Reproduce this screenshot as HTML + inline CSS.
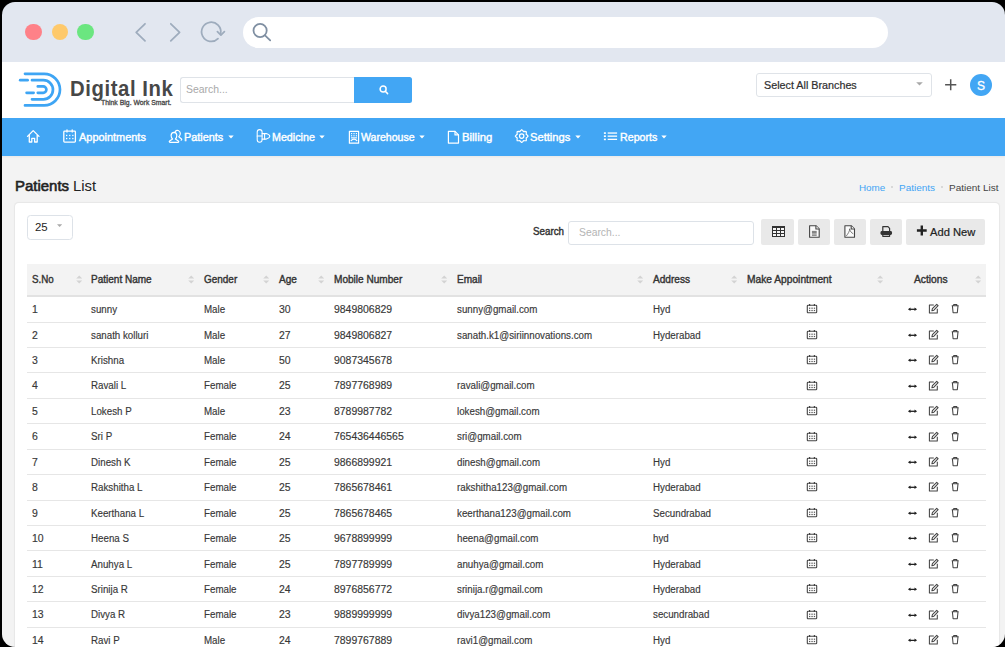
<!DOCTYPE html><html><head><meta charset="utf-8"><style>html,body{margin:0;padding:0;background:#000;overflow:hidden;width:1005px;height:647px;}#w{position:absolute;left:1.5px;top:1.6px;width:1003.5px;height:645.4px;overflow:hidden;border-radius:13px;}#in{position:absolute;left:-1.5px;top:-1.6px;width:1005px;height:647px;}.a{position:absolute;}.t{position:absolute;white-space:nowrap;font-family:"Liberation Sans",sans-serif;}</style></head><body><div id="w"><div id="in">
<svg width="0" height="0" style="position:absolute"><defs><g id="cal"><rect x="1.3" y="2.2" width="9.4" height="7.6" rx="0.8" fill="none" stroke="#444" stroke-width="1.1"/><path d="M3.6 1V3M8.4 1V3" stroke="#444" stroke-width="1.2"/><g fill="#555"><rect x="3" y="4.6" width="1.3" height="1.2"/><rect x="5.4" y="4.6" width="1.3" height="1.2"/><rect x="7.8" y="4.6" width="1.3" height="1.2"/><rect x="3" y="6.9" width="1.3" height="1.2"/><rect x="5.4" y="6.9" width="1.3" height="1.2"/><rect x="7.8" y="6.9" width="1.3" height="1.2"/></g></g><g id="act"><path d="M3.2 6.3H9.8" stroke="#222" stroke-width="1.3"/><path d="M1.9 6.3L4.5 4.6V8Z M11.1 6.3L8.5 4.6V8Z" fill="#222"/><g fill="none" stroke="#444" stroke-width="1.05" stroke-linejoin="round"><path d="M27.8 2H23.4V9.9H31.3V5.8"/><path d="M25.9 7.8L26.4 5.7L30.7 1.3L32.1 2.7L27.9 7.2Z"/><path d="M45.7 2.8H52.7M47.7 2.8V1.5H50.8V2.8M46.4 2.9L47.1 9.8H51.3L52 2.9"/></g></g></defs></svg>
<div class="a" style="left:0;top:150px;width:1005px;height:497px;background:#f3f3f3"></div>
<div class="a" style="left:0;top:0;width:1005px;height:62px;background:#e2e7f0"></div>
<div class="a" style="left:25.3px;top:23.8px;width:16.6px;height:16.6px;border-radius:50%;background:#fe8188"></div>
<div class="a" style="left:51.5px;top:23.8px;width:16.6px;height:16.6px;border-radius:50%;background:#fec96b"></div>
<div class="a" style="left:77.0px;top:23.8px;width:16.6px;height:16.6px;border-radius:50%;background:#6be680"></div>
<svg class="a" style="left:0;top:0" width="300" height="62"><g fill="none" stroke="#9eacbd" stroke-width="1.75" stroke-linecap="round" stroke-linejoin="round"><path d="M145 23.8L136.2 32.3L145 40.8"/><path d="M170.8 23.8L179.6 32.3L170.8 40.8"/><path d="M218 38.6A9.6 9.6 0 1 1 220.65 33.5"/><path d="M217.4 31.6L220.9 35.1L224.4 31.7"/></g></svg>
<div class="a" style="left:243px;top:17px;width:645px;height:31px;border-radius:15.5px;background:#fff"></div>
<svg class="a" style="left:0;top:0" width="300" height="62"><g fill="none" stroke="#7f8fa2" stroke-width="1.8" stroke-linecap="round"><circle cx="260.1" cy="30.5" r="6.6"/><path d="M265 35.4L270.2 40.4"/></g></svg>
<div class="a" style="left:0;top:62px;width:1005px;height:56px;background:#fff"></div>
<svg class="a" style="left:0;top:62px" width="70" height="56" viewBox="0 62 70 56"><g fill="none" stroke="#3ea5f4" stroke-width="2.7" stroke-linecap="round"><path d="M25 73.8H44.2A15.8 15.8 0 0 1 44.2 105.4H25"/><path d="M32 80.2H43.4A9.55 9.55 0 0 1 43.4 99.3H32"/><path d="M37.8 86.4H43.2A3.2 3.2 0 0 1 43.2 92.8H37.8"/><path d="M20.2 80.2H27.6"/><path d="M26.6 92.8H33.6"/></g></svg>
<div id="t0" class="t" style="left:69.80px;top:78.65px;font-size:21.3px;line-height:21.3px;font-weight:700;color:#474747;transform:scaleX(0.9543);transform-origin:0 0;letter-spacing:0.6px;">Digital Ink</div>
<div id="t1" class="t" style="left:101.00px;top:99.50px;font-size:6.6px;line-height:6.6px;font-weight:400;color:#4a4a4a;transform:scaleX(1.0415);transform-origin:0 0;-webkit-text-stroke:0.3px #4a4a4a;">Think Big. Work Smart.</div>
<div class="a" style="left:180px;top:77px;width:174px;height:26px;box-sizing:border-box;border:1px solid #dfe3e8;border-right:none;border-radius:3px 0 0 3px;background:#fff"></div>
<div id="t2" class="t" style="left:186.20px;top:84.70px;font-size:10.2px;line-height:10.2px;font-weight:400;color:#a9a9a9;transform:scaleX(1.0233);transform-origin:0 0;">Search...</div>
<div class="a" style="left:354px;top:77px;width:58.4px;height:25.6px;background:#42a6f4;border-radius:0 2.5px 2.5px 0"></div>
<svg class="a" style="left:377px;top:83px" width="12" height="12"><g fill="none" stroke="#fff" stroke-width="1.5" stroke-linecap="round"><circle cx="6.1" cy="6.1" r="3.0"/><path d="M8.3 8.3L10.6 10.6"/></g></svg>
<div class="a" style="left:755.8px;top:73.2px;width:176px;height:23.6px;box-sizing:border-box;border:1px solid #dfe3e8;border-radius:3px;background:#fff"></div>
<div id="t3" class="t" style="left:763.70px;top:80.05px;font-size:10.5px;line-height:10.5px;font-weight:400;color:#2f2f2f;transform:scaleX(1.0253);transform-origin:0 0;-webkit-text-stroke:0.2px #2f2f2f;">Select All Branches</div>
<svg class="a" style="left:915px;top:81px" width="9" height="6"><path d="M1.2 1.2H7.8L4.5 4.4Z" fill="#a8a8a8"/></svg>
<svg class="a" style="left:940px;top:74px" width="22" height="22"><g stroke="#555" stroke-width="1.5"><path d="M10.7 5.2V16.3M5.1 10.7H16.3"/></g></svg>
<div class="a" style="left:969.5px;top:73.8px;width:22.7px;height:22.7px;border-radius:50%;background:#42a6f4"></div>
<div id="t4" class="t" style="left:977.30px;top:80.30px;font-size:12px;line-height:12px;font-weight:400;color:#fff;transform:scaleX(1.0033);transform-origin:0 0;-webkit-text-stroke:0.3px #fff;">S</div>
<div class="a" style="left:0;top:118px;width:1005px;height:37.5px;background:#42a6f4;box-shadow:0 1px 2px rgba(0,0,0,0.05)"></div>
<div id="t5" class="t" style="left:78.80px;top:131.80px;font-size:11px;line-height:11px;font-weight:400;color:#fff;transform:scaleX(0.9941);transform-origin:0 0;-webkit-text-stroke:0.4px #fff;">Appointments</div>
<div id="t6" class="t" style="left:184.20px;top:131.80px;font-size:11px;line-height:11px;font-weight:400;color:#fff;transform:scaleX(0.9877);transform-origin:0 0;-webkit-text-stroke:0.4px #fff;">Patients</div>
<div id="t7" class="t" style="left:272.30px;top:131.80px;font-size:11px;line-height:11px;font-weight:400;color:#fff;transform:scaleX(0.9732);transform-origin:0 0;-webkit-text-stroke:0.4px #fff;">Medicine</div>
<div id="t8" class="t" style="left:360.70px;top:131.80px;font-size:11px;line-height:11px;font-weight:400;color:#fff;transform:scaleX(0.9605);transform-origin:0 0;-webkit-text-stroke:0.4px #fff;">Warehouse</div>
<div id="t9" class="t" style="left:461.50px;top:131.80px;font-size:11px;line-height:11px;font-weight:400;color:#fff;transform:scaleX(1.0319);transform-origin:0 0;-webkit-text-stroke:0.4px #fff;">Billing</div>
<div id="t10" class="t" style="left:530.40px;top:131.80px;font-size:11px;line-height:11px;font-weight:400;color:#fff;transform:scaleX(1.0134);transform-origin:0 0;-webkit-text-stroke:0.4px #fff;">Settings</div>
<div id="t11" class="t" style="left:619.60px;top:131.80px;font-size:11px;line-height:11px;font-weight:400;color:#fff;transform:scaleX(0.9692);transform-origin:0 0;-webkit-text-stroke:0.4px #fff;">Reports</div>
<svg class="a" style="left:227.5px;top:135px" width="6" height="4"><path d="M0.3 0.4H5.7L3 3.4Z" fill="#fff"/></svg>
<svg class="a" style="left:319.2px;top:135px" width="6" height="4"><path d="M0.3 0.4H5.7L3 3.4Z" fill="#fff"/></svg>
<svg class="a" style="left:418.6px;top:135px" width="6" height="4"><path d="M0.3 0.4H5.7L3 3.4Z" fill="#fff"/></svg>
<svg class="a" style="left:574.5px;top:135px" width="6" height="4"><path d="M0.3 0.4H5.7L3 3.4Z" fill="#fff"/></svg>
<svg class="a" style="left:660.6px;top:135px" width="6" height="4"><path d="M0.3 0.4H5.7L3 3.4Z" fill="#fff"/></svg>
<svg class="a" style="left:0;top:118px" width="700" height="37" viewBox="0 118 700 37"><g fill="none" stroke="#fff" stroke-width="1.3" stroke-linejoin="round" stroke-linecap="round"><path d="M27.5 136.4L33.2 130.6L39 136.4M29.3 134.8V142H31.8V138.3H34.6V142H37.2V134.8"/><rect x="63.8" y="131.2" width="11.6" height="10.9" rx="0.8"/><path d="M67 129.8V132M72.2 129.8V132"/></g><g fill="#fff"><rect x="66" y="134.8" width="1.3" height="1.3"/><rect x="69.1" y="134.8" width="1.3" height="1.3"/><rect x="72.2" y="134.8" width="1.3" height="1.3"/><rect x="66" y="137.9" width="1.3" height="1.3"/><rect x="69.1" y="137.9" width="1.3" height="1.3"/><rect x="72.2" y="137.9" width="1.3" height="1.3"/></g><g fill="none" stroke="#fff" stroke-width="1.2" stroke-linejoin="round" stroke-linecap="round"><path d="M175.2 131.6A2.9 3.3 0 0 1 180.3 133.2C180.4 135 179.6 136 178.8 136.7L181.5 139C181.9 139.4 181.8 140 181.2 140.2"/><path d="M174 132.3A3 3.3 0 0 1 176.8 135.6C176.8 137.3 176.2 138.3 175.4 139L178.4 140.9C179 141.3 178.8 142.3 178 142.3H169.9C169.2 142.3 169 141.3 169.6 140.9L172.6 139C171.8 138.3 171.1 137.3 171.1 135.6A3 3.3 0 0 1 174 132.3Z"/><g stroke-width="1.05"><rect x="257.2" y="129.6" width="4.9" height="12.6" rx="2.45"/><path d="M257.2 135.9H262.1"/><path d="M262.1 133.6H266.3Q269.8 134.8 269.8 136.35Q269.8 137.9 266.3 139.1H262.1"/><path d="M264.6 133.6V139.1"/></g><rect x="349.4" y="131.3" width="9.2" height="11.9"/><path d="M351.2 140.5Q354 137.6 356.8 140.5"/><path d="M448.4 131.4H455L458.5 134.9V143.1H448.4Z"/><path d="M455 131.4V134.9H458.5"/></g><g fill="#fff"><rect x="351" y="133" width="1.2" height="1.2"/><rect x="353.4" y="133" width="1.2" height="1.2"/><rect x="355.8" y="133" width="1.2" height="1.2"/><rect x="351" y="135.2" width="1.2" height="1.2"/><rect x="353.4" y="135.2" width="1.2" height="1.2"/><rect x="355.8" y="135.2" width="1.2" height="1.2"/><rect x="351" y="137.3" width="6" height="1.1"/></g><g fill="none" stroke="#fff" stroke-width="1.2" stroke-linejoin="round"><path d="M521.70 129.70 L522.79 130.61 L523.54 131.67 L524.81 131.44 L526.23 131.57 L526.36 132.99 L526.13 134.26 L527.19 135.01 L528.10 136.10 L527.19 137.19 L526.13 137.94 L526.36 139.21 L526.23 140.63 L524.81 140.76 L523.54 140.53 L522.79 141.59 L521.70 142.50 L520.61 141.59 L519.86 140.53 L518.59 140.76 L517.17 140.63 L517.04 139.21 L517.27 137.94 L516.21 137.19 L515.30 136.10 L516.21 135.01 L517.27 134.26 L517.04 132.99 L517.17 131.57 L518.59 131.44 L519.86 131.67 L520.61 130.61Z"/><circle cx="521.7" cy="136.1" r="2.2"/></g><g fill="#fff"><rect x="603.9" y="132.3" width="2" height="1.6"/><rect x="603.9" y="135.4" width="2" height="1.6"/><rect x="603.9" y="138.6" width="2" height="1.6"/><rect x="607.7" y="132.4" width="9.4" height="1.3"/><rect x="607.7" y="135.5" width="9.4" height="1.3"/><rect x="607.7" y="138.7" width="9.4" height="1.3"/></g></svg>
<div id="t12" class="t" style="left:15.20px;top:178.30px;font-size:15px;line-height:15px;font-weight:400;color:#222;transform:scaleX(0.9972);transform-origin:0 0;-webkit-text-stroke:0.6px #222;">Patients</div>
<div id="t13" class="t" style="left:72.50px;top:178.30px;font-size:15px;line-height:15px;font-weight:400;color:#222;transform:scaleX(0.9913);transform-origin:0 0;">List</div>
<div id="t14" class="t" style="left:859.40px;top:183.05px;font-size:9.5px;line-height:9.5px;font-weight:400;color:#42a5f5;transform:scaleX(1.0373);transform-origin:0 0;">Home</div>
<div id="t15" class="t" style="left:898.90px;top:183.05px;font-size:9.5px;line-height:9.5px;font-weight:400;color:#42a5f5;transform:scaleX(1.0516);transform-origin:0 0;">Patients</div>
<div id="t16" class="t" style="left:949.10px;top:183.05px;font-size:9.5px;line-height:9.5px;font-weight:400;color:#444;transform:scaleX(1.0532);transform-origin:0 0;">Patient List</div>
<div class="a" style="left:891.3px;top:186.3px;width:2.2px;height:2.2px;border-radius:50%;background:#cfcfcf"></div>
<div class="a" style="left:941.1px;top:186.3px;width:2.2px;height:2.2px;border-radius:50%;background:#cfcfcf"></div>
<div class="a" style="left:14.5px;top:202.8px;width:984px;height:460px;background:#fff;border-radius:4px;box-shadow:0 0 1px 0.5px rgba(0,0,0,0.05)"></div>
<div class="a" style="left:27.3px;top:215.3px;width:45.4px;height:24.3px;box-sizing:border-box;border:1px solid #dde2e8;border-radius:3.5px"></div>
<div id="t17" class="t" style="left:35.40px;top:222.65px;font-size:10.3px;line-height:10.3px;font-weight:400;color:#222;transform:scaleX(1.1072);transform-origin:0 0;">25</div>
<svg class="a" style="left:56px;top:223px" width="8" height="6"><path d="M1 1.2H6.2L3.6 4Z" fill="#aaa"/></svg>
<div id="t18" class="t" style="left:532.50px;top:226.80px;font-size:10px;line-height:10px;font-weight:400;color:#333;transform:scaleX(0.9779);transform-origin:0 0;-webkit-text-stroke:0.4px #333;">Search</div>
<div class="a" style="left:568.3px;top:220.5px;width:186.2px;height:24.8px;box-sizing:border-box;border:1px solid #dde2e8;border-radius:3px"></div>
<div id="t19" class="t" style="left:578.50px;top:227.70px;font-size:10.2px;line-height:10.2px;font-weight:400;color:#b4b4b4;transform:scaleX(1.0157);transform-origin:0 0;">Search...</div>
<div class="a" style="left:761.3px;top:219px;width:32.8px;height:26px;background:#e9e9e9;border-radius:2px"></div>
<div class="a" style="left:798.1px;top:219px;width:31.9px;height:26px;background:#e9e9e9;border-radius:2px"></div>
<div class="a" style="left:834.1px;top:219px;width:31.9px;height:26px;background:#e9e9e9;border-radius:2px"></div>
<div class="a" style="left:870.1px;top:219px;width:31.9px;height:26px;background:#e9e9e9;border-radius:2px"></div>
<div class="a" style="left:906.2px;top:219px;width:78.8px;height:26px;background:#e9e9e9;border-radius:2px"></div>
<div id="t20" class="t" style="left:929.80px;top:226.70px;font-size:11.2px;line-height:11.2px;font-weight:400;color:#222;transform:scaleX(0.9972);transform-origin:0 0;-webkit-text-stroke:0.2px #222;">Add New</div>
<svg class="a" style="left:915px;top:224px" width="14" height="14"><path d="M6.8 1.6V11.4M1.9 6.5H11.7" stroke="#222" stroke-width="2.4"/></svg>
<svg class="a" style="left:760px;top:218px" width="140" height="28" viewBox="760 218 140 28"><g shape-rendering="crispEdges"><rect x="772" y="226" width="13" height="11" fill="#333"/><g fill="#f6f6f6"><rect x="773" y="228" width="3" height="2"/><rect x="777" y="228" width="3" height="2"/><rect x="781" y="228" width="3" height="2"/><rect x="773" y="231" width="3" height="2"/><rect x="777" y="231" width="3" height="2"/><rect x="781" y="231" width="3" height="2"/><rect x="773" y="234" width="3" height="2"/><rect x="777" y="234" width="3" height="2"/><rect x="781" y="234" width="3" height="2"/></g></g><g fill="#fbfbfb" stroke="#444" stroke-width="1.1" stroke-linejoin="round"><path d="M809.6 225.7H815.9L819.2 229V237.3H809.6Z"/><path d="M815.9 225.7V229H819.2"/><path d="M844.9 225.7H851.2L854.5 229V237.3H844.9Z"/><path d="M851.2 225.7V229H854.5"/></g><path d="M846.3 236C847.8 234 849.9 231 849.6 228.8C850.2 231.4 851.3 232.8 853.3 233.8" fill="none" stroke="#555" stroke-width="0.75"/><g fill="#666"><rect x="811.9" y="230.9" width="4.8" height="0.9"/><rect x="811.9" y="232.2" width="4.8" height="0.9"/><rect x="811.9" y="233.5" width="4.8" height="0.9"/><rect x="811.9" y="234.8" width="4.8" height="0.9"/></g><g fill="none" stroke="#333" stroke-width="1.2" stroke-linejoin="round"><path d="M882.8 231.5V226.7H888L889.6 228.3V231.5"/><path d="M882.8 233.5V236.3H889.6V233.5"/></g><rect x="880.5" y="231" width="11.5" height="4" rx="1.4" fill="#333"/></svg>
<div class="a" style="left:27.2px;top:263.6px;width:958.6px;height:31.8px;background:#f3f3f3"></div>
<div class="a" style="left:27.2px;top:295.2px;width:958.6px;height:1.8px;background:#e2e2e2"></div>
<div id="t21" class="t" style="left:32.10px;top:274.80px;font-size:10px;line-height:10px;font-weight:400;color:#333;transform:scaleX(0.9752);transform-origin:0 0;-webkit-text-stroke:0.38px #333;">S.No</div>
<div id="t22" class="t" style="left:91.20px;top:274.80px;font-size:10px;line-height:10px;font-weight:400;color:#333;transform:scaleX(1.0018);transform-origin:0 0;-webkit-text-stroke:0.38px #333;">Patient Name</div>
<div id="t23" class="t" style="left:203.80px;top:274.80px;font-size:10px;line-height:10px;font-weight:400;color:#333;transform:scaleX(0.9951);transform-origin:0 0;-webkit-text-stroke:0.38px #333;">Gender</div>
<div id="t24" class="t" style="left:279.00px;top:274.80px;font-size:10px;line-height:10px;font-weight:400;color:#333;transform:scaleX(1.0060);transform-origin:0 0;-webkit-text-stroke:0.38px #333;">Age</div>
<div id="t25" class="t" style="left:333.60px;top:274.80px;font-size:10px;line-height:10px;font-weight:400;color:#333;transform:scaleX(1.0072);transform-origin:0 0;-webkit-text-stroke:0.38px #333;">Mobile Number</div>
<div id="t26" class="t" style="left:457.10px;top:274.80px;font-size:10px;line-height:10px;font-weight:400;color:#333;transform:scaleX(1.0035);transform-origin:0 0;-webkit-text-stroke:0.38px #333;">Email</div>
<div id="t27" class="t" style="left:652.60px;top:274.80px;font-size:10px;line-height:10px;font-weight:400;color:#333;transform:scaleX(1.0114);transform-origin:0 0;-webkit-text-stroke:0.38px #333;">Address</div>
<div id="t28" class="t" style="left:746.80px;top:274.80px;font-size:10px;line-height:10px;font-weight:400;color:#333;transform:scaleX(1.0216);transform-origin:0 0;-webkit-text-stroke:0.38px #333;">Make Appointment</div>
<div id="t29" class="t" style="left:914.20px;top:274.80px;font-size:10px;line-height:10px;font-weight:400;color:#333;transform:scaleX(1.0251);transform-origin:0 0;-webkit-text-stroke:0.38px #333;">Actions</div>
<svg class="a" style="left:75.5px;top:275px" width="7" height="9" viewBox="0 0 7 9"><path d="M3.2 0.6L6.2 3.6H0.2Z M3.2 8.4L6.2 5.4H0.2Z" fill="#d3d3d3"/></svg>
<svg class="a" style="left:188.4px;top:275px" width="7" height="9" viewBox="0 0 7 9"><path d="M3.2 0.6L6.2 3.6H0.2Z M3.2 8.4L6.2 5.4H0.2Z" fill="#d3d3d3"/></svg>
<svg class="a" style="left:263.0px;top:275px" width="7" height="9" viewBox="0 0 7 9"><path d="M3.2 0.6L6.2 3.6H0.2Z M3.2 8.4L6.2 5.4H0.2Z" fill="#d3d3d3"/></svg>
<svg class="a" style="left:317.7px;top:275px" width="7" height="9" viewBox="0 0 7 9"><path d="M3.2 0.6L6.2 3.6H0.2Z M3.2 8.4L6.2 5.4H0.2Z" fill="#d3d3d3"/></svg>
<svg class="a" style="left:441.0px;top:275px" width="7" height="9" viewBox="0 0 7 9"><path d="M3.2 0.6L6.2 3.6H0.2Z M3.2 8.4L6.2 5.4H0.2Z" fill="#d3d3d3"/></svg>
<svg class="a" style="left:636.6px;top:275px" width="7" height="9" viewBox="0 0 7 9"><path d="M3.2 0.6L6.2 3.6H0.2Z M3.2 8.4L6.2 5.4H0.2Z" fill="#d3d3d3"/></svg>
<svg class="a" style="left:730.6px;top:275px" width="7" height="9" viewBox="0 0 7 9"><path d="M3.2 0.6L6.2 3.6H0.2Z M3.2 8.4L6.2 5.4H0.2Z" fill="#d3d3d3"/></svg>
<svg class="a" style="left:877.1px;top:275px" width="7" height="9" viewBox="0 0 7 9"><path d="M3.2 0.6L6.2 3.6H0.2Z M3.2 8.4L6.2 5.4H0.2Z" fill="#d3d3d3"/></svg>
<svg class="a" style="left:975.0px;top:275px" width="7" height="9" viewBox="0 0 7 9"><path d="M3.2 0.6L6.2 3.6H0.2Z M3.2 8.4L6.2 5.4H0.2Z" fill="#d3d3d3"/></svg>
<div class="t" style="left:32.00px;top:304.80px;font-size:10px;line-height:10px;color:#383838;-webkit-text-stroke:0.15px #383838;transform:scaleX(1.045);transform-origin:0 0">1</div>
<div class="t" style="left:91.10px;top:304.80px;font-size:10px;line-height:10px;color:#383838;-webkit-text-stroke:0.15px #383838;transform:scaleX(0.975);transform-origin:0 0">sunny</div>
<div class="t" style="left:203.70px;top:304.80px;font-size:10px;line-height:10px;color:#383838;-webkit-text-stroke:0.15px #383838;transform:scaleX(0.975);transform-origin:0 0">Male</div>
<div class="t" style="left:278.90px;top:304.80px;font-size:10px;line-height:10px;color:#383838;-webkit-text-stroke:0.15px #383838;transform:scaleX(1.045);transform-origin:0 0">30</div>
<div class="t" style="left:333.50px;top:304.80px;font-size:10px;line-height:10px;color:#383838;-webkit-text-stroke:0.15px #383838;transform:scaleX(1.045);transform-origin:0 0">9849806829</div>
<div class="t" style="left:457.00px;top:304.80px;font-size:10px;line-height:10px;color:#383838;-webkit-text-stroke:0.15px #383838;transform:scaleX(0.975);transform-origin:0 0">sunny@gmail.com</div>
<div class="t" style="left:652.50px;top:304.80px;font-size:10px;line-height:10px;color:#383838;-webkit-text-stroke:0.15px #383838;transform:scaleX(0.975);transform-origin:0 0">Hyd</div>
<svg class="a" style="left:806px;top:303.40px" width="12" height="11" viewBox="0 0 12 11"><use href="#cal"/></svg>
<svg class="a" style="left:906px;top:303.40px" width="56" height="11" viewBox="0 0 56 11"><use href="#act"/></svg>
<div class="a" style="left:27px;top:322px;width:959px;height:1px;background:#e6e6e6"></div>
<div class="t" style="left:32.00px;top:330.80px;font-size:10px;line-height:10px;color:#383838;-webkit-text-stroke:0.15px #383838;transform:scaleX(1.045);transform-origin:0 0">2</div>
<div class="t" style="left:91.10px;top:330.80px;font-size:10px;line-height:10px;color:#383838;-webkit-text-stroke:0.15px #383838;transform:scaleX(0.975);transform-origin:0 0">sanath kolluri</div>
<div class="t" style="left:203.70px;top:330.80px;font-size:10px;line-height:10px;color:#383838;-webkit-text-stroke:0.15px #383838;transform:scaleX(0.975);transform-origin:0 0">Male</div>
<div class="t" style="left:278.90px;top:330.80px;font-size:10px;line-height:10px;color:#383838;-webkit-text-stroke:0.15px #383838;transform:scaleX(1.045);transform-origin:0 0">27</div>
<div class="t" style="left:333.50px;top:330.80px;font-size:10px;line-height:10px;color:#383838;-webkit-text-stroke:0.15px #383838;transform:scaleX(1.045);transform-origin:0 0">9849806827</div>
<div class="t" style="left:457.00px;top:330.80px;font-size:10px;line-height:10px;color:#383838;-webkit-text-stroke:0.15px #383838;transform:scaleX(0.975);transform-origin:0 0">sanath.k1@siriinnovations.com</div>
<div class="t" style="left:652.50px;top:330.80px;font-size:10px;line-height:10px;color:#383838;-webkit-text-stroke:0.15px #383838;transform:scaleX(0.975);transform-origin:0 0">Hyderabad</div>
<svg class="a" style="left:806px;top:328.83px" width="12" height="11" viewBox="0 0 12 11"><use href="#cal"/></svg>
<svg class="a" style="left:906px;top:328.83px" width="56" height="11" viewBox="0 0 56 11"><use href="#act"/></svg>
<div class="a" style="left:27px;top:347px;width:959px;height:1px;background:#e6e6e6"></div>
<div class="t" style="left:32.00px;top:355.80px;font-size:10px;line-height:10px;color:#383838;-webkit-text-stroke:0.15px #383838;transform:scaleX(1.045);transform-origin:0 0">3</div>
<div class="t" style="left:91.10px;top:355.80px;font-size:10px;line-height:10px;color:#383838;-webkit-text-stroke:0.15px #383838;transform:scaleX(0.975);transform-origin:0 0">Krishna</div>
<div class="t" style="left:203.70px;top:355.80px;font-size:10px;line-height:10px;color:#383838;-webkit-text-stroke:0.15px #383838;transform:scaleX(0.975);transform-origin:0 0">Male</div>
<div class="t" style="left:278.90px;top:355.80px;font-size:10px;line-height:10px;color:#383838;-webkit-text-stroke:0.15px #383838;transform:scaleX(1.045);transform-origin:0 0">50</div>
<div class="t" style="left:333.50px;top:355.80px;font-size:10px;line-height:10px;color:#383838;-webkit-text-stroke:0.15px #383838;transform:scaleX(1.045);transform-origin:0 0">9087345678</div>
<svg class="a" style="left:806px;top:354.26px" width="12" height="11" viewBox="0 0 12 11"><use href="#cal"/></svg>
<svg class="a" style="left:906px;top:354.26px" width="56" height="11" viewBox="0 0 56 11"><use href="#act"/></svg>
<div class="a" style="left:27px;top:372px;width:959px;height:1px;background:#e6e6e6"></div>
<div class="t" style="left:32.00px;top:380.80px;font-size:10px;line-height:10px;color:#383838;-webkit-text-stroke:0.15px #383838;transform:scaleX(1.045);transform-origin:0 0">4</div>
<div class="t" style="left:91.10px;top:380.80px;font-size:10px;line-height:10px;color:#383838;-webkit-text-stroke:0.15px #383838;transform:scaleX(0.975);transform-origin:0 0">Ravali L</div>
<div class="t" style="left:203.70px;top:380.80px;font-size:10px;line-height:10px;color:#383838;-webkit-text-stroke:0.15px #383838;transform:scaleX(0.975);transform-origin:0 0">Female</div>
<div class="t" style="left:278.90px;top:380.80px;font-size:10px;line-height:10px;color:#383838;-webkit-text-stroke:0.15px #383838;transform:scaleX(1.045);transform-origin:0 0">25</div>
<div class="t" style="left:333.50px;top:380.80px;font-size:10px;line-height:10px;color:#383838;-webkit-text-stroke:0.15px #383838;transform:scaleX(1.045);transform-origin:0 0">7897768989</div>
<div class="t" style="left:457.00px;top:380.80px;font-size:10px;line-height:10px;color:#383838;-webkit-text-stroke:0.15px #383838;transform:scaleX(0.975);transform-origin:0 0">ravali@gmail.com</div>
<svg class="a" style="left:806px;top:379.69px" width="12" height="11" viewBox="0 0 12 11"><use href="#cal"/></svg>
<svg class="a" style="left:906px;top:379.69px" width="56" height="11" viewBox="0 0 56 11"><use href="#act"/></svg>
<div class="a" style="left:27px;top:398px;width:959px;height:1px;background:#e6e6e6"></div>
<div class="t" style="left:32.00px;top:406.80px;font-size:10px;line-height:10px;color:#383838;-webkit-text-stroke:0.15px #383838;transform:scaleX(1.045);transform-origin:0 0">5</div>
<div class="t" style="left:91.10px;top:406.80px;font-size:10px;line-height:10px;color:#383838;-webkit-text-stroke:0.15px #383838;transform:scaleX(0.975);transform-origin:0 0">Lokesh P</div>
<div class="t" style="left:203.70px;top:406.80px;font-size:10px;line-height:10px;color:#383838;-webkit-text-stroke:0.15px #383838;transform:scaleX(0.975);transform-origin:0 0">Male</div>
<div class="t" style="left:278.90px;top:406.80px;font-size:10px;line-height:10px;color:#383838;-webkit-text-stroke:0.15px #383838;transform:scaleX(1.045);transform-origin:0 0">23</div>
<div class="t" style="left:333.50px;top:406.80px;font-size:10px;line-height:10px;color:#383838;-webkit-text-stroke:0.15px #383838;transform:scaleX(1.045);transform-origin:0 0">8789987782</div>
<div class="t" style="left:457.00px;top:406.80px;font-size:10px;line-height:10px;color:#383838;-webkit-text-stroke:0.15px #383838;transform:scaleX(0.975);transform-origin:0 0">lokesh@gmail.com</div>
<svg class="a" style="left:806px;top:405.12px" width="12" height="11" viewBox="0 0 12 11"><use href="#cal"/></svg>
<svg class="a" style="left:906px;top:405.12px" width="56" height="11" viewBox="0 0 56 11"><use href="#act"/></svg>
<div class="a" style="left:27px;top:423px;width:959px;height:1px;background:#e6e6e6"></div>
<div class="t" style="left:32.00px;top:431.80px;font-size:10px;line-height:10px;color:#383838;-webkit-text-stroke:0.15px #383838;transform:scaleX(1.045);transform-origin:0 0">6</div>
<div class="t" style="left:91.10px;top:431.80px;font-size:10px;line-height:10px;color:#383838;-webkit-text-stroke:0.15px #383838;transform:scaleX(0.975);transform-origin:0 0">Sri P</div>
<div class="t" style="left:203.70px;top:431.80px;font-size:10px;line-height:10px;color:#383838;-webkit-text-stroke:0.15px #383838;transform:scaleX(0.975);transform-origin:0 0">Female</div>
<div class="t" style="left:278.90px;top:431.80px;font-size:10px;line-height:10px;color:#383838;-webkit-text-stroke:0.15px #383838;transform:scaleX(1.045);transform-origin:0 0">24</div>
<div class="t" style="left:333.50px;top:431.80px;font-size:10px;line-height:10px;color:#383838;-webkit-text-stroke:0.15px #383838;transform:scaleX(1.045);transform-origin:0 0">765436446565</div>
<div class="t" style="left:457.00px;top:431.80px;font-size:10px;line-height:10px;color:#383838;-webkit-text-stroke:0.15px #383838;transform:scaleX(0.975);transform-origin:0 0">sri@gmail.com</div>
<svg class="a" style="left:806px;top:430.55px" width="12" height="11" viewBox="0 0 12 11"><use href="#cal"/></svg>
<svg class="a" style="left:906px;top:430.55px" width="56" height="11" viewBox="0 0 56 11"><use href="#act"/></svg>
<div class="a" style="left:27px;top:449px;width:959px;height:1px;background:#e6e6e6"></div>
<div class="t" style="left:32.00px;top:457.80px;font-size:10px;line-height:10px;color:#383838;-webkit-text-stroke:0.15px #383838;transform:scaleX(1.045);transform-origin:0 0">7</div>
<div class="t" style="left:91.10px;top:457.80px;font-size:10px;line-height:10px;color:#383838;-webkit-text-stroke:0.15px #383838;transform:scaleX(0.975);transform-origin:0 0">Dinesh K</div>
<div class="t" style="left:203.70px;top:457.80px;font-size:10px;line-height:10px;color:#383838;-webkit-text-stroke:0.15px #383838;transform:scaleX(0.975);transform-origin:0 0">Female</div>
<div class="t" style="left:278.90px;top:457.80px;font-size:10px;line-height:10px;color:#383838;-webkit-text-stroke:0.15px #383838;transform:scaleX(1.045);transform-origin:0 0">25</div>
<div class="t" style="left:333.50px;top:457.80px;font-size:10px;line-height:10px;color:#383838;-webkit-text-stroke:0.15px #383838;transform:scaleX(1.045);transform-origin:0 0">9866899921</div>
<div class="t" style="left:457.00px;top:457.80px;font-size:10px;line-height:10px;color:#383838;-webkit-text-stroke:0.15px #383838;transform:scaleX(0.975);transform-origin:0 0">dinesh@gmail.com</div>
<div class="t" style="left:652.50px;top:457.80px;font-size:10px;line-height:10px;color:#383838;-webkit-text-stroke:0.15px #383838;transform:scaleX(0.975);transform-origin:0 0">Hyd</div>
<svg class="a" style="left:806px;top:455.98px" width="12" height="11" viewBox="0 0 12 11"><use href="#cal"/></svg>
<svg class="a" style="left:906px;top:455.98px" width="56" height="11" viewBox="0 0 56 11"><use href="#act"/></svg>
<div class="a" style="left:27px;top:474px;width:959px;height:1px;background:#e6e6e6"></div>
<div class="t" style="left:32.00px;top:482.80px;font-size:10px;line-height:10px;color:#383838;-webkit-text-stroke:0.15px #383838;transform:scaleX(1.045);transform-origin:0 0">8</div>
<div class="t" style="left:91.10px;top:482.80px;font-size:10px;line-height:10px;color:#383838;-webkit-text-stroke:0.15px #383838;transform:scaleX(0.975);transform-origin:0 0">Rakshitha L</div>
<div class="t" style="left:203.70px;top:482.80px;font-size:10px;line-height:10px;color:#383838;-webkit-text-stroke:0.15px #383838;transform:scaleX(0.975);transform-origin:0 0">Female</div>
<div class="t" style="left:278.90px;top:482.80px;font-size:10px;line-height:10px;color:#383838;-webkit-text-stroke:0.15px #383838;transform:scaleX(1.045);transform-origin:0 0">25</div>
<div class="t" style="left:333.50px;top:482.80px;font-size:10px;line-height:10px;color:#383838;-webkit-text-stroke:0.15px #383838;transform:scaleX(1.045);transform-origin:0 0">7865678461</div>
<div class="t" style="left:457.00px;top:482.80px;font-size:10px;line-height:10px;color:#383838;-webkit-text-stroke:0.15px #383838;transform:scaleX(0.975);transform-origin:0 0">rakshitha123@gmail.com</div>
<div class="t" style="left:652.50px;top:482.80px;font-size:10px;line-height:10px;color:#383838;-webkit-text-stroke:0.15px #383838;transform:scaleX(0.975);transform-origin:0 0">Hyderabad</div>
<svg class="a" style="left:806px;top:481.41px" width="12" height="11" viewBox="0 0 12 11"><use href="#cal"/></svg>
<svg class="a" style="left:906px;top:481.41px" width="56" height="11" viewBox="0 0 56 11"><use href="#act"/></svg>
<div class="a" style="left:27px;top:500px;width:959px;height:1px;background:#e6e6e6"></div>
<div class="t" style="left:32.00px;top:508.80px;font-size:10px;line-height:10px;color:#383838;-webkit-text-stroke:0.15px #383838;transform:scaleX(1.045);transform-origin:0 0">9</div>
<div class="t" style="left:91.10px;top:508.80px;font-size:10px;line-height:10px;color:#383838;-webkit-text-stroke:0.15px #383838;transform:scaleX(0.975);transform-origin:0 0">Keerthana L</div>
<div class="t" style="left:203.70px;top:508.80px;font-size:10px;line-height:10px;color:#383838;-webkit-text-stroke:0.15px #383838;transform:scaleX(0.975);transform-origin:0 0">Female</div>
<div class="t" style="left:278.90px;top:508.80px;font-size:10px;line-height:10px;color:#383838;-webkit-text-stroke:0.15px #383838;transform:scaleX(1.045);transform-origin:0 0">25</div>
<div class="t" style="left:333.50px;top:508.80px;font-size:10px;line-height:10px;color:#383838;-webkit-text-stroke:0.15px #383838;transform:scaleX(1.045);transform-origin:0 0">7865678465</div>
<div class="t" style="left:457.00px;top:508.80px;font-size:10px;line-height:10px;color:#383838;-webkit-text-stroke:0.15px #383838;transform:scaleX(0.975);transform-origin:0 0">keerthana123@gmail.com</div>
<div class="t" style="left:652.50px;top:508.80px;font-size:10px;line-height:10px;color:#383838;-webkit-text-stroke:0.15px #383838;transform:scaleX(0.975);transform-origin:0 0">Secundrabad</div>
<svg class="a" style="left:806px;top:506.84px" width="12" height="11" viewBox="0 0 12 11"><use href="#cal"/></svg>
<svg class="a" style="left:906px;top:506.84px" width="56" height="11" viewBox="0 0 56 11"><use href="#act"/></svg>
<div class="a" style="left:27px;top:525px;width:959px;height:1px;background:#e6e6e6"></div>
<div class="t" style="left:32.00px;top:533.80px;font-size:10px;line-height:10px;color:#383838;-webkit-text-stroke:0.15px #383838;transform:scaleX(1.045);transform-origin:0 0">10</div>
<div class="t" style="left:91.10px;top:533.80px;font-size:10px;line-height:10px;color:#383838;-webkit-text-stroke:0.15px #383838;transform:scaleX(0.975);transform-origin:0 0">Heena S</div>
<div class="t" style="left:203.70px;top:533.80px;font-size:10px;line-height:10px;color:#383838;-webkit-text-stroke:0.15px #383838;transform:scaleX(0.975);transform-origin:0 0">Female</div>
<div class="t" style="left:278.90px;top:533.80px;font-size:10px;line-height:10px;color:#383838;-webkit-text-stroke:0.15px #383838;transform:scaleX(1.045);transform-origin:0 0">25</div>
<div class="t" style="left:333.50px;top:533.80px;font-size:10px;line-height:10px;color:#383838;-webkit-text-stroke:0.15px #383838;transform:scaleX(1.045);transform-origin:0 0">9678899999</div>
<div class="t" style="left:457.00px;top:533.80px;font-size:10px;line-height:10px;color:#383838;-webkit-text-stroke:0.15px #383838;transform:scaleX(0.975);transform-origin:0 0">heena@gmail.com</div>
<div class="t" style="left:652.50px;top:533.80px;font-size:10px;line-height:10px;color:#383838;-webkit-text-stroke:0.15px #383838;transform:scaleX(0.975);transform-origin:0 0">hyd</div>
<svg class="a" style="left:806px;top:532.27px" width="12" height="11" viewBox="0 0 12 11"><use href="#cal"/></svg>
<svg class="a" style="left:906px;top:532.27px" width="56" height="11" viewBox="0 0 56 11"><use href="#act"/></svg>
<div class="a" style="left:27px;top:550px;width:959px;height:1px;background:#e6e6e6"></div>
<div class="t" style="left:32.00px;top:559.80px;font-size:10px;line-height:10px;color:#383838;-webkit-text-stroke:0.15px #383838;transform:scaleX(1.045);transform-origin:0 0">11</div>
<div class="t" style="left:91.10px;top:559.80px;font-size:10px;line-height:10px;color:#383838;-webkit-text-stroke:0.15px #383838;transform:scaleX(0.975);transform-origin:0 0">Anuhya L</div>
<div class="t" style="left:203.70px;top:559.80px;font-size:10px;line-height:10px;color:#383838;-webkit-text-stroke:0.15px #383838;transform:scaleX(0.975);transform-origin:0 0">Female</div>
<div class="t" style="left:278.90px;top:559.80px;font-size:10px;line-height:10px;color:#383838;-webkit-text-stroke:0.15px #383838;transform:scaleX(1.045);transform-origin:0 0">25</div>
<div class="t" style="left:333.50px;top:559.80px;font-size:10px;line-height:10px;color:#383838;-webkit-text-stroke:0.15px #383838;transform:scaleX(1.045);transform-origin:0 0">7897789999</div>
<div class="t" style="left:457.00px;top:559.80px;font-size:10px;line-height:10px;color:#383838;-webkit-text-stroke:0.15px #383838;transform:scaleX(0.975);transform-origin:0 0">anuhya@gmail.com</div>
<div class="t" style="left:652.50px;top:559.80px;font-size:10px;line-height:10px;color:#383838;-webkit-text-stroke:0.15px #383838;transform:scaleX(0.975);transform-origin:0 0">Hyderabad</div>
<svg class="a" style="left:806px;top:557.70px" width="12" height="11" viewBox="0 0 12 11"><use href="#cal"/></svg>
<svg class="a" style="left:906px;top:557.70px" width="56" height="11" viewBox="0 0 56 11"><use href="#act"/></svg>
<div class="a" style="left:27px;top:576px;width:959px;height:1px;background:#e6e6e6"></div>
<div class="t" style="left:32.00px;top:584.80px;font-size:10px;line-height:10px;color:#383838;-webkit-text-stroke:0.15px #383838;transform:scaleX(1.045);transform-origin:0 0">12</div>
<div class="t" style="left:91.10px;top:584.80px;font-size:10px;line-height:10px;color:#383838;-webkit-text-stroke:0.15px #383838;transform:scaleX(0.975);transform-origin:0 0">Srinija R</div>
<div class="t" style="left:203.70px;top:584.80px;font-size:10px;line-height:10px;color:#383838;-webkit-text-stroke:0.15px #383838;transform:scaleX(0.975);transform-origin:0 0">Female</div>
<div class="t" style="left:278.90px;top:584.80px;font-size:10px;line-height:10px;color:#383838;-webkit-text-stroke:0.15px #383838;transform:scaleX(1.045);transform-origin:0 0">24</div>
<div class="t" style="left:333.50px;top:584.80px;font-size:10px;line-height:10px;color:#383838;-webkit-text-stroke:0.15px #383838;transform:scaleX(1.045);transform-origin:0 0">8976856772</div>
<div class="t" style="left:457.00px;top:584.80px;font-size:10px;line-height:10px;color:#383838;-webkit-text-stroke:0.15px #383838;transform:scaleX(0.975);transform-origin:0 0">srinija.r@gmail.com</div>
<div class="t" style="left:652.50px;top:584.80px;font-size:10px;line-height:10px;color:#383838;-webkit-text-stroke:0.15px #383838;transform:scaleX(0.975);transform-origin:0 0">Hyderabad</div>
<svg class="a" style="left:806px;top:583.13px" width="12" height="11" viewBox="0 0 12 11"><use href="#cal"/></svg>
<svg class="a" style="left:906px;top:583.13px" width="56" height="11" viewBox="0 0 56 11"><use href="#act"/></svg>
<div class="a" style="left:27px;top:601px;width:959px;height:1px;background:#e6e6e6"></div>
<div class="t" style="left:32.00px;top:609.80px;font-size:10px;line-height:10px;color:#383838;-webkit-text-stroke:0.15px #383838;transform:scaleX(1.045);transform-origin:0 0">13</div>
<div class="t" style="left:91.10px;top:609.80px;font-size:10px;line-height:10px;color:#383838;-webkit-text-stroke:0.15px #383838;transform:scaleX(0.975);transform-origin:0 0">Divya R</div>
<div class="t" style="left:203.70px;top:609.80px;font-size:10px;line-height:10px;color:#383838;-webkit-text-stroke:0.15px #383838;transform:scaleX(0.975);transform-origin:0 0">Female</div>
<div class="t" style="left:278.90px;top:609.80px;font-size:10px;line-height:10px;color:#383838;-webkit-text-stroke:0.15px #383838;transform:scaleX(1.045);transform-origin:0 0">23</div>
<div class="t" style="left:333.50px;top:609.80px;font-size:10px;line-height:10px;color:#383838;-webkit-text-stroke:0.15px #383838;transform:scaleX(1.045);transform-origin:0 0">9889999999</div>
<div class="t" style="left:457.00px;top:609.80px;font-size:10px;line-height:10px;color:#383838;-webkit-text-stroke:0.15px #383838;transform:scaleX(0.975);transform-origin:0 0">divya123@gmail.com</div>
<div class="t" style="left:652.50px;top:609.80px;font-size:10px;line-height:10px;color:#383838;-webkit-text-stroke:0.15px #383838;transform:scaleX(0.975);transform-origin:0 0">secundrabad</div>
<svg class="a" style="left:806px;top:608.56px" width="12" height="11" viewBox="0 0 12 11"><use href="#cal"/></svg>
<svg class="a" style="left:906px;top:608.56px" width="56" height="11" viewBox="0 0 56 11"><use href="#act"/></svg>
<div class="a" style="left:27px;top:627px;width:959px;height:1px;background:#e6e6e6"></div>
<div class="t" style="left:32.00px;top:635.80px;font-size:10px;line-height:10px;color:#383838;-webkit-text-stroke:0.15px #383838;transform:scaleX(1.045);transform-origin:0 0">14</div>
<div class="t" style="left:91.10px;top:635.80px;font-size:10px;line-height:10px;color:#383838;-webkit-text-stroke:0.15px #383838;transform:scaleX(0.975);transform-origin:0 0">Ravi P</div>
<div class="t" style="left:203.70px;top:635.80px;font-size:10px;line-height:10px;color:#383838;-webkit-text-stroke:0.15px #383838;transform:scaleX(0.975);transform-origin:0 0">Male</div>
<div class="t" style="left:278.90px;top:635.80px;font-size:10px;line-height:10px;color:#383838;-webkit-text-stroke:0.15px #383838;transform:scaleX(1.045);transform-origin:0 0">24</div>
<div class="t" style="left:333.50px;top:635.80px;font-size:10px;line-height:10px;color:#383838;-webkit-text-stroke:0.15px #383838;transform:scaleX(1.045);transform-origin:0 0">7899767889</div>
<div class="t" style="left:457.00px;top:635.80px;font-size:10px;line-height:10px;color:#383838;-webkit-text-stroke:0.15px #383838;transform:scaleX(0.975);transform-origin:0 0">ravi1@gmail.com</div>
<div class="t" style="left:652.50px;top:635.80px;font-size:10px;line-height:10px;color:#383838;-webkit-text-stroke:0.15px #383838;transform:scaleX(0.975);transform-origin:0 0">Hyd</div>
<svg class="a" style="left:806px;top:633.99px" width="12" height="11" viewBox="0 0 12 11"><use href="#cal"/></svg>
<svg class="a" style="left:906px;top:633.99px" width="56" height="11" viewBox="0 0 56 11"><use href="#act"/></svg>
</div></div></body></html>
